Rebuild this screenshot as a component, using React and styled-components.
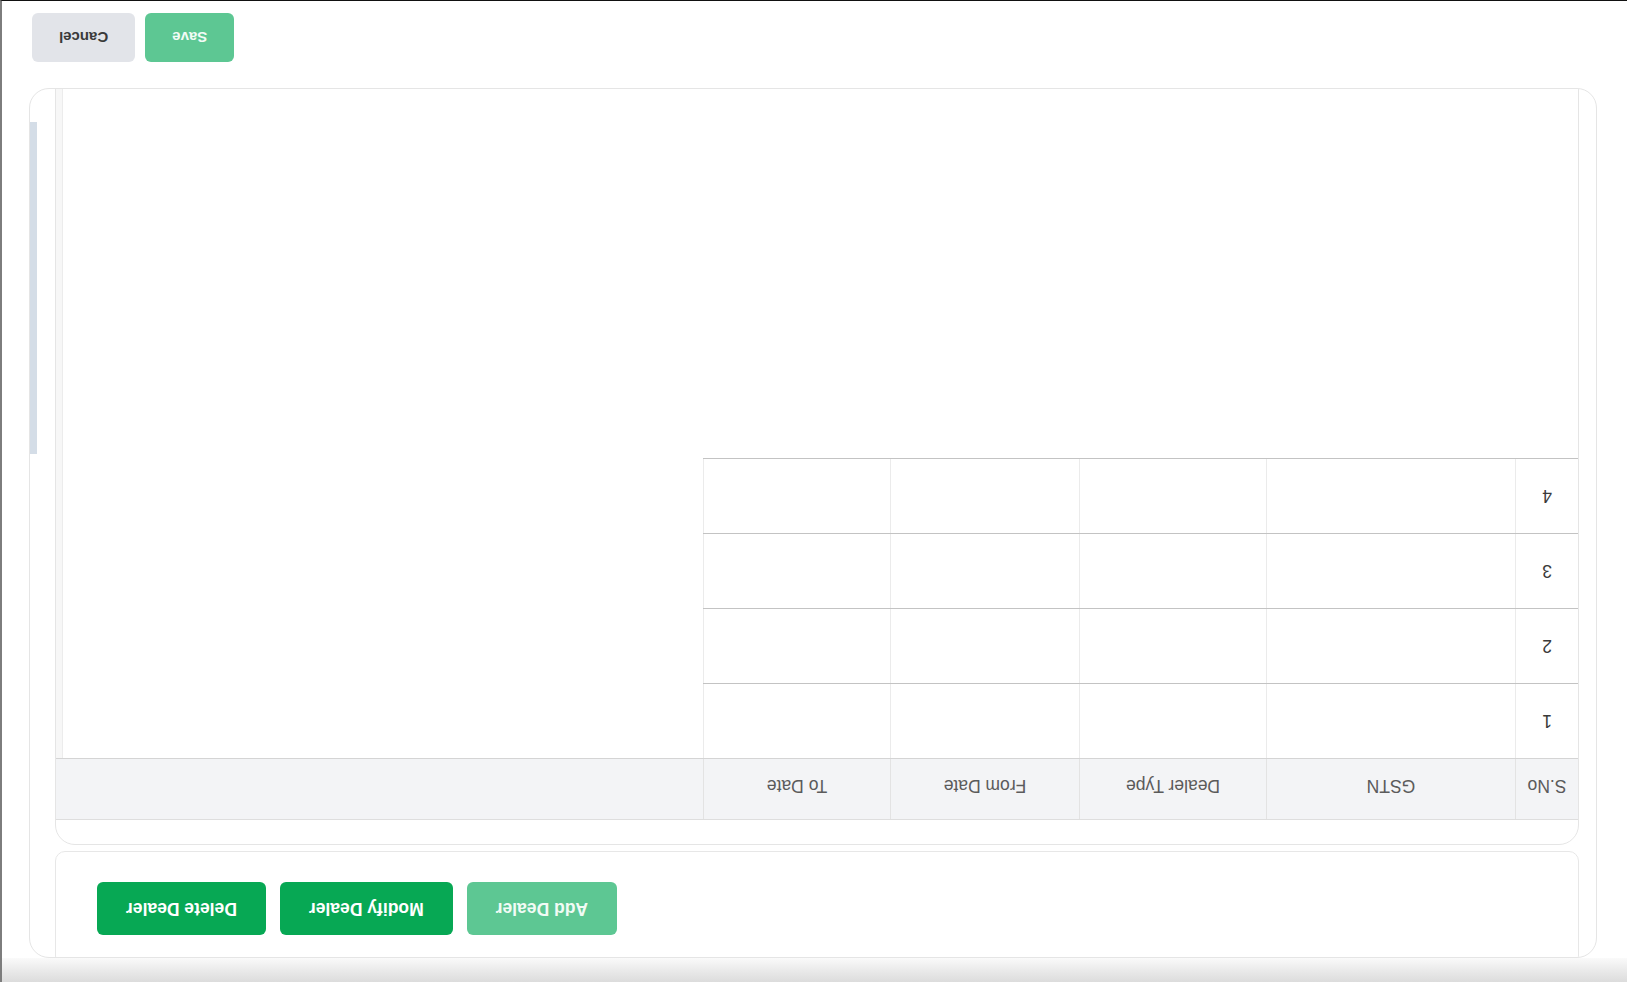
import React from 'react';
import styled, { createGlobalStyle } from 'styled-components';

const Global = createGlobalStyle`
  html, body { margin: 0; padding: 0; background: #fff; overflow: hidden; }
  * { box-sizing: border-box; }
`;

const Frame = styled.div`
  width: 1627px;
  height: 982px;
  transform: rotate(180deg);
  display: flex;
  flex-direction: column;
  border-right: 2px solid #7d7d7d;
  border-bottom: 1px solid #111;
  background: #fff;
  font-family: "Liberation Sans", Arial, sans-serif;
  overflow: hidden;
`;

const TopShade = styled.div`
  flex: none;
  height: 24px;
  background: linear-gradient(#dcdcdc, #ececec 55%, #fafafa);
`;

const Shell = styled.section`
  flex: none;
  margin-left: 30px;
  width: 1568px;
  height: 870px;
  border: 1px solid #e5e5e5;
  border-radius: 20px;
  overflow: hidden;
  display: flex;
  background: #fff;
`;

const Content = styled.div`
  flex: 1;
  min-width: 0;
  padding: 0 18px 0 17px;
  display: flex;
  flex-direction: column;
  gap: 6px;
  overflow: hidden;
`;

const ScrollTrack = styled.div`
  flex: none;
  width: 7px;
  display: flex;
  flex-direction: column;
`;

const ScrollThumb = styled.div`
  margin-top: ${(p) => p.$offset}px;
  height: ${(p) => p.$size}px;
  background: #d4dde7;
`;

const ActionCard = styled.div`
  flex: none;
  margin-top: -9px;
  border: 1px solid #e7e7e7;
  border-radius: 10px;
  padding: 30px 41px 30px;
  display: flex;
  justify-content: flex-end;
  gap: 14px;
  background: #fff;
`;

const ActionButton = styled.button`
  height: 53px;
  padding: 0 29px;
  border: none;
  border-radius: 6px;
  background: ${(p) => (p.$muted ? '#5dc793' : '#07a854')};
  color: ${(p) => (p.$muted ? '#f1fbf5' : '#ffffff')};
  font-family: inherit;
  font-size: 17.5px;
  font-weight: 700;
  cursor: pointer;
`;

const TableCard = styled.div`
  flex: none;
  height: 800px;
  border: 1px solid #e5e5e5;
  border-radius: 20px;
  padding-top: 24px;
  display: flex;
  flex-direction: column;
  overflow: hidden;
  background: #fff;
`;

const columns = '63px 249px 187px 189px 187px';

const HeaderRow = styled.div`
  flex: none;
  display: grid;
  grid-template-columns: ${columns} 1fr;
  height: 62px;
  background: #f3f4f6;
  border-top: 1px solid #dedede;
  border-bottom: 1px solid #d4d4d4;
`;

const HeaderCell = styled.div`
  display: flex;
  align-items: center;
  justify-content: center;
  padding-top: 7px;
  border-right: ${(p) => (p.$last ? 'none' : '1px solid #e3e3e3')};
  color: #5b5b5b;
  font-size: 17.5px;
`;

const Body = styled.div`
  flex: 1;
  display: flex;
  min-height: 0;
`;

const Rows = styled.div`
  flex: none;
  width: 875px;
  display: flex;
  flex-direction: column;
`;

const Filler = styled.div`
  flex: 1;
`;

const BodyTrack = styled.div`
  flex: none;
  width: 7px;
  background: #f7f7f7;
  border-left: 1px solid #ececec;
`;

const Row = styled.div`
  display: grid;
  grid-template-columns: ${columns};
  height: 75px;
  border-bottom: 1px solid #c3c3c3;
`;

const Cell = styled.div`
  display: flex;
  align-items: center;
  justify-content: center;
  border-right: 1px solid #ebebeb;
  color: #3a3a3a;
  font-size: 17.5px;
`;

const Footer = styled.div`
  flex: none;
  display: flex;
  justify-content: flex-end;
  gap: 10px;
  padding: 26px 30px 0 0;
`;

const FooterButton = styled.button`
  height: 49px;
  padding: 0 27px;
  border: none;
  border-radius: 6px;
  background: ${(p) => (p.$primary ? '#5dc793' : '#e2e4e9')};
  color: ${(p) => (p.$primary ? '#f2fbf6' : '#3a3a3a')};
  font-family: inherit;
  font-size: 15px;
  font-weight: 700;
  cursor: pointer;
`;

const headers = ['S.No', 'GSTN', 'Dealer Type', 'From Date', 'To Date', ''];
const rows = [1, 2, 3, 4];

export default function App() {
  return (
    <>
      <Global />
      <Frame>
        <TopShade />
        <Shell>
          <Content>
            <ActionCard>
              <ActionButton $muted>Add Dealer</ActionButton>
              <ActionButton>Modify Dealer</ActionButton>
              <ActionButton>Delete Dealer</ActionButton>
            </ActionCard>
            <TableCard>
              <HeaderRow>
                {headers.map((h, i) => (
                  <HeaderCell key={i} $last={i === headers.length - 1}>
                    {h}
                  </HeaderCell>
                ))}
              </HeaderRow>
              <Body>
                <Rows>
                  {rows.map((n) => (
                    <Row key={n}>
                      <Cell>{n}</Cell>
                      <Cell />
                      <Cell />
                      <Cell />
                      <Cell />
                    </Row>
                  ))}
                </Rows>
                <Filler />
                <BodyTrack />
              </Body>
            </TableCard>
          </Content>
          <ScrollTrack>
            <ScrollThumb $offset={503} $size={332} />
          </ScrollTrack>
        </Shell>
        <Footer>
          <FooterButton $primary>Save</FooterButton>
          <FooterButton>Cancel</FooterButton>
        </Footer>
      </Frame>
    </>
  );
}
